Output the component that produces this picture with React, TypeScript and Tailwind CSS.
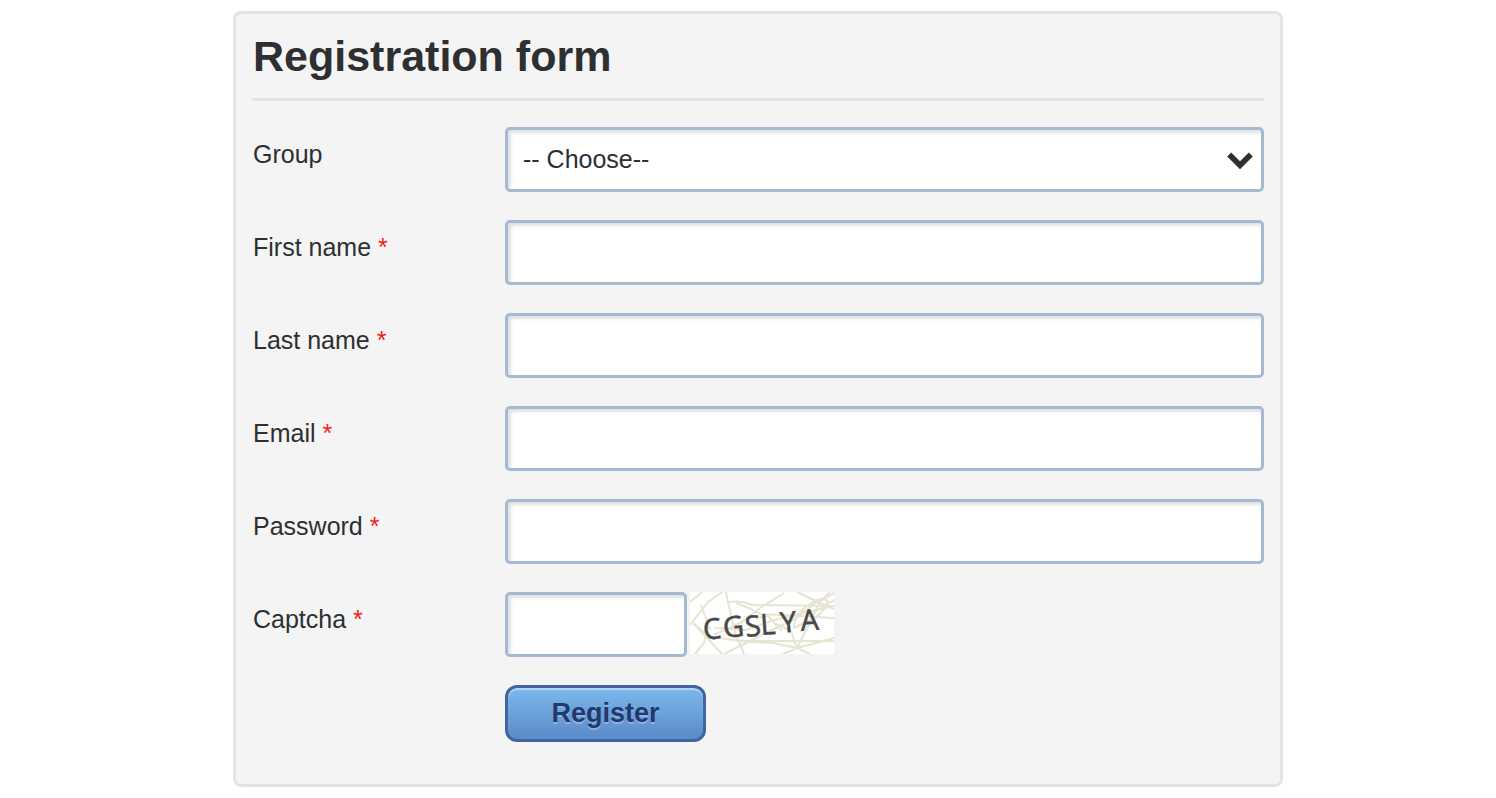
const FIELDS = [
  { id: "firstName", label: "First name", type: "text" },
  { id: "lastName", label: "Last name", type: "text" },
  { id: "email", label: "Email", type: "email" },
  { id: "password", label: "Password", type: "password" },
] as const;

const CAPTCHA = [
  { char: "C", x: 14, y: 48, rotate: -6 },
  { char: "G", x: 34, y: 46, rotate: -6 },
  { char: "S", x: 56, y: 45, rotate: -6 },
  { char: "L", x: 71, y: 43, rotate: -4 },
  { char: "Y", x: 91, y: 41, rotate: -5 },
  { char: "A", x: 111, y: 39, rotate: -4 },
];

const fieldClass =
  "h-[65px] rounded-[5px] border-3 border-[#a5b9d1] bg-white px-[15px] text-[25px] text-[#2d2f30] shadow-[inset_3px_3px_3px_#e2e2e5] outline-none focus:border-[#5f8fc8]";

function Label({
  htmlFor,
  text,
  required,
}: {
  htmlFor: string;
  text: string;
  required?: boolean;
}) {
  return (
    <label
      htmlFor={htmlFor}
      className="w-[253px] shrink-0 pt-3 pl-px leading-[30px]"
    >
      {text}
      {required && <span className="text-[#f01e14]"> *</span>}
    </label>
  );
}

function CaptchaImage() {
  return (
    <svg
      viewBox="0 0 144 62"
      className="h-[62px] w-36 bg-white"
      role="img"
      aria-label="Captcha code"
    >
      <g
        fill="none"
        stroke="#dcd9c0"
        strokeWidth="2"
        strokeLinejoin="round"
        opacity="0.7"
      >
        <path d="M0 10 L12 0 M0 33 L18 10 L32 0 M36 0 L38 10 L45 40 L54 62" />
        <path d="M11 13 L20 38 M3 31 L32 62 M5 62 L14 51 L16 42 L3 31" />
        <path d="M38 10 Q52 8 62 13 L144 14 M46 11 Q60 16 70 22 L144 26" />
        <path d="M94 1 L70 16 L52 30 L24 43 M24 36 L56 38 L84 28 L144 14" />
        <path d="M34 62 L56 51 L84 37 L107 26 L124 12 L144 1" />
        <path d="M22 45 L50 49 L83 51 L107 56 L126 51 L144 46 M50 49 L144 49" />
        <path d="M107 56 L118 34 L130 10 L140 0 M107 56 L101 39 L84 31" />
        <path d="M107 56 L120 62 M107 56 L93 62 M107 0 L126 9 L144 17" />
        <path d="M104 36 Q104 22 120 12 Q132 4 138 9 Q134 22 120 28 Q108 34 104 36" />
        <path d="M112 20 L128 18 L144 8 M66 26 L78 24 L92 39" />
      </g>
      <g
        fill="#484848"
        stroke="#484848"
        strokeWidth="0.4"
        fontFamily="'Noto Sans', 'Open Sans', sans-serif"
        fontSize="29"
      >
        {CAPTCHA.map(({ char, x, y, rotate }) => (
          <text key={char} x={x} y={y} transform={`rotate(${rotate} ${x} ${y})`}>
            {char}
          </text>
        ))}
      </g>
    </svg>
  );
}

export default function App() {
  return (
    <main className="bg-white py-[11px] pl-5 font-['Liberation_Sans',Arial,sans-serif] text-[25px] text-[#2d2f30]">
      <form
        onSubmit={(e) => e.preventDefault()}
        className="mx-auto max-w-[1050px] rounded-lg border-3 border-[#e4e4e4] bg-[#f4f4f4] px-4 pt-[17px] pb-[42px]"
      >
        <h1 className="mb-[26px] border-b-3 border-[#e4e4e4] pb-[17px] pl-px text-[43px] leading-[50px] font-bold">
          Registration form
        </h1>

        <div className="flex flex-col gap-7">
          <div className="flex items-start">
            <Label htmlFor="group" text="Group" />
            <div className="relative min-w-0 flex-1">
              <select
                id="group"
                className={`${fieldClass} block w-full appearance-none`}
              >
                <option>-- Choose--</option>
              </select>
              <svg
                viewBox="0 0 26 18"
                className="pointer-events-none absolute top-[25px] right-[11px] h-[18px] w-[26px]"
                fill="none"
                stroke="#2d2f30"
                strokeWidth="5.6"
              >
                <path d="M2.2 2.5 L13 13.2 L23.8 2.5" />
              </svg>
            </div>
          </div>

          {FIELDS.map(({ id, label, type }) => (
            <div key={id} className="flex items-start">
              <Label htmlFor={id} text={label} required />
              <input
                id={id}
                type={type}
                required
                className={`${fieldClass} min-w-0 flex-1`}
              />
            </div>
          ))}

          <div className="flex items-start">
            <Label htmlFor="captcha" text="Captcha" required />
            <div className="flex items-start gap-[3px]">
              <input
                id="captcha"
                type="text"
                required
                autoComplete="off"
                className={`${fieldClass} w-[182px]`}
              />
              <CaptchaImage />
            </div>
          </div>

          <div className="pl-[253px]">
            <button
              type="submit"
              className="block h-[57px] w-[201px] rounded-xl border-3 border-[#42659f] bg-linear-to-b from-[#7cb8ec] to-[#5b8aca] text-[27px] font-bold text-[#1f3a6b] shadow-[inset_0_2px_1px_#b0d7f8] text-shadow-[0_2px_0_#8fb1e0]"
            >
              Register
            </button>
          </div>
        </div>
      </form>
    </main>
  );
}
